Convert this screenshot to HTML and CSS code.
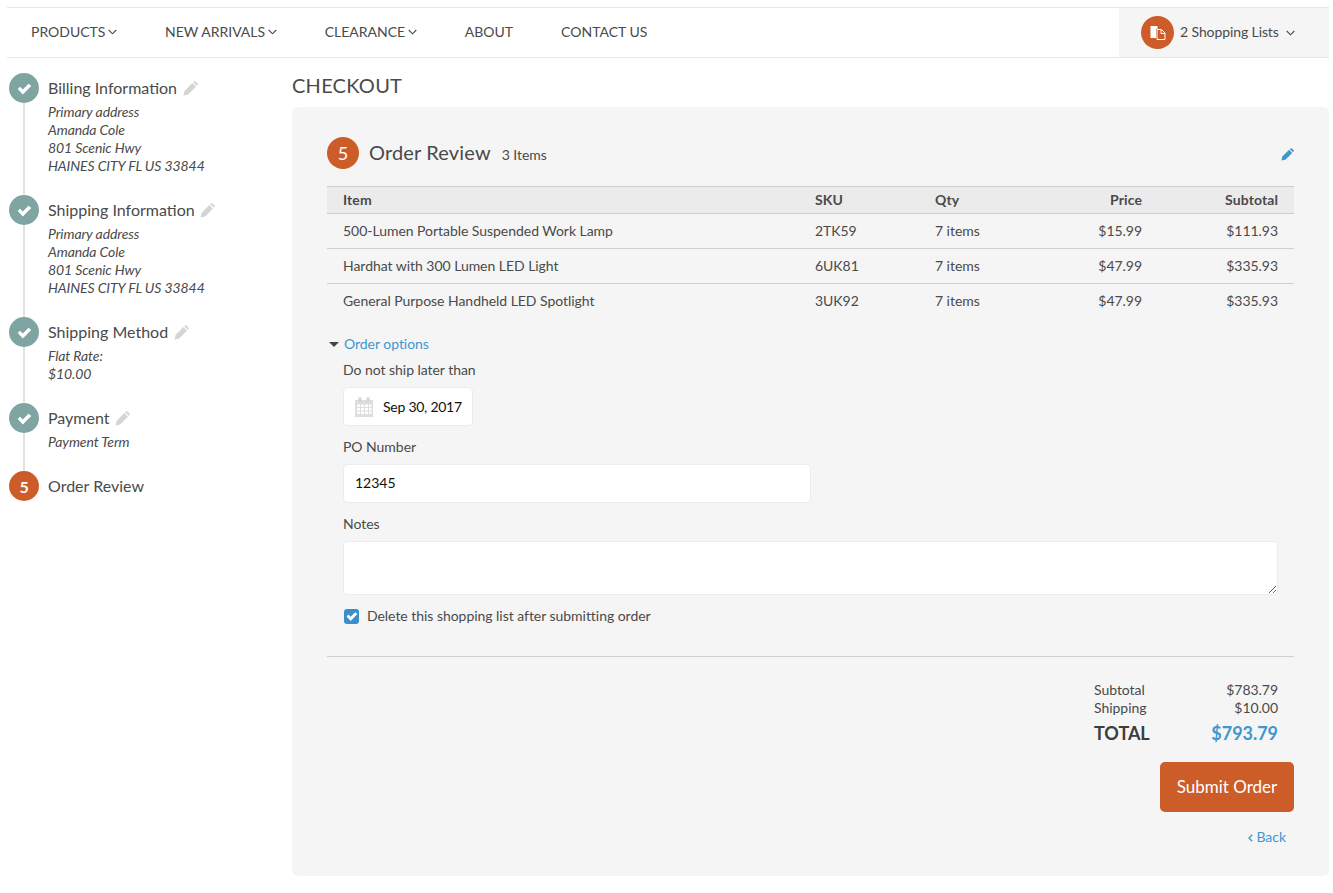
FILE: index.html
```html
<!DOCTYPE html>
<html lang="en">
<head>
    <meta charset="UTF-8">
    <meta name="viewport" content="width=device-width, initial-scale=1.0">
    <title>Checkout</title>
    <link rel="stylesheet" href="styles.css">
</head>
<body>

    <svg class="icon-defs" aria-hidden="true">
        <symbol id="i-pencil" viewBox="0 0 16 16">
            <path d="M.6 15.400l1-4.800 8.400-8.400 3.800 3.800-8.400 8.400z"/>
            <path d="M10.900 1.300l.7-.7a1.300 1.300 0 0 1 1.800 0l2 2a1.300 1.300 0 0 1 0 1.800l-.7.7z"/>
        </symbol>
        <symbol id="i-check" viewBox="0 0 16 16">
            <path d="M.8 8.500l2.400-2.400 3 3 6.100-6.200 2.900 2.400-9 9.200z"/>
        </symbol>
        <symbol id="i-chevron" viewBox="0 0 9 6">
            <path d="M.7 1l3.800 3.800L8.300 1" fill="none" stroke="currentColor" stroke-width="1.100"/>
        </symbol>
    </svg>

    <!-- Top navigation -->
    <nav class="topnav">
        <ul class="nav-links">
            <li>PRODUCTS <svg class="chevron"><use href="#i-chevron"/></svg></li>
            <li>NEW ARRIVALS <svg class="chevron"><use href="#i-chevron"/></svg></li>
            <li>CLEARANCE <svg class="chevron"><use href="#i-chevron"/></svg></li>
            <li>ABOUT</li>
            <li>CONTACT US</li>
        </ul>
        <div class="lists-menu">
            <span class="lists-badge">
                <svg width="16" height="16" viewBox="0 0 16 16">
                    <path d="M.5 1h7v3H6v9H.5z" fill="#fff"/>
                    <path d="M7 4.500h4.500l3.500 3.500v6.500H7z" fill="none" stroke="#fff"/>
                    <path d="M11 4.500V8.500h4" fill="none" stroke="#fff"/>
                </svg>
            </span>
            <span class="lists-label">2 Shopping Lists</span>
            <svg class="chevron chevron-lists"><use href="#i-chevron"/></svg>
        </div>
    </nav>

    <div class="layout">

        <!-- Checkout steps -->
        <aside class="steps">
            <div class="step step-address">
                <div class="rail">
                    <span class="dot done"><svg class="dot-check"><use href="#i-check"/></svg></span>
                    <span class="rail-line"></span>
                </div>
                <div class="step-body">
                    <h3>Billing Information <svg class="edit"><use href="#i-pencil"/></svg></h3>
                    <p>Primary address<br>Amanda Cole<br>801 Scenic Hwy<br>HAINES CITY FL US 33844</p>
                </div>
            </div>
            <div class="step step-address">
                <div class="rail">
                    <span class="dot done"><svg class="dot-check"><use href="#i-check"/></svg></span>
                    <span class="rail-line"></span>
                </div>
                <div class="step-body">
                    <h3>Shipping Information <svg class="edit"><use href="#i-pencil"/></svg></h3>
                    <p>Primary address<br>Amanda Cole<br>801 Scenic Hwy<br>HAINES CITY FL US 33844</p>
                </div>
            </div>
            <div class="step step-method">
                <div class="rail">
                    <span class="dot done"><svg class="dot-check"><use href="#i-check"/></svg></span>
                    <span class="rail-line"></span>
                </div>
                <div class="step-body">
                    <h3>Shipping Method <svg class="edit"><use href="#i-pencil"/></svg></h3>
                    <p>Flat Rate:<br>$10.00</p>
                </div>
            </div>
            <div class="step step-payment">
                <div class="rail">
                    <span class="dot done"><svg class="dot-check"><use href="#i-check"/></svg></span>
                    <span class="rail-line"></span>
                </div>
                <div class="step-body">
                    <h3>Payment <svg class="edit"><use href="#i-pencil"/></svg></h3>
                    <p>Payment Term</p>
                </div>
            </div>
            <div class="step">
                <div class="rail">
                    <span class="dot current">5</span>
                </div>
                <div class="step-body">
                    <h3>Order Review</h3>
                </div>
            </div>
        </aside>

        <main class="content">
            <h1>CHECKOUT</h1>

            <section class="panel">
                <header class="panel-head">
                    <span class="panel-num">5</span>
                    <h2>Order Review</h2>
                    <span class="item-count">3 Items</span>
                    <svg class="edit-blue"><use href="#i-pencil"/></svg>
                </header>

                <table class="items">
                    <thead>
                        <tr>
                            <th class="col-item">Item</th>
                            <th class="col-sku">SKU</th>
                            <th class="col-qty">Qty</th>
                            <th class="col-price">Price</th>
                            <th class="col-sub">Subtotal</th>
                        </tr>
                    </thead>
                    <tbody>
                        <tr>
                            <td>500-Lumen Portable Suspended Work Lamp</td>
                            <td>2TK59</td>
                            <td>7 items</td>
                            <td class="num">$15.99</td>
                            <td class="num">$111.93</td>
                        </tr>
                        <tr>
                            <td>Hardhat with 300 Lumen LED Light</td>
                            <td>6UK81</td>
                            <td>7 items</td>
                            <td class="num">$47.99</td>
                            <td class="num">$335.93</td>
                        </tr>
                        <tr>
                            <td>General Purpose Handheld LED Spotlight</td>
                            <td>3UK92</td>
                            <td>7 items</td>
                            <td class="num">$47.99</td>
                            <td class="num">$335.93</td>
                        </tr>
                    </tbody>
                </table>

                <div class="options-toggle"><span class="caret"></span><a href="#">Order options</a></div>

                <form class="options">
                    <label class="field-label">Do not ship later than</label>
                    <div class="date-input">
                        <svg width="20" height="20" viewBox="0 0 20 20">
                            <path d="M1 3h18v17H1z" fill="#dedede"/>
                            <path d="M4.500.500h3V5h-3zM12.500.500h3V5h-3z" fill="#d4d4d4"/>
                            <path d="M3 7.500h3v2.500H3zM7 7.500h3v2.500H7zM11 7.500h3v2.500h-3zM15 7.500h2.500v2.500H15zM3 11h3v2.500H3zM7 11h3v2.500H7zM11 11h3v2.500h-3zM15 11h2.500v2.500H15zM3 14.500h3V17H3zM7 14.500h3V17H7zM11 14.500h3V17h-3zM15 14.500h2.500V17H15z" fill="#fff"/>
                        </svg>
                        <span class="date-value">Sep 30, 2017</span>
                    </div>

                    <label class="field-label">PO Number</label>
                    <input class="text-input" type="text" value="12345">

                    <label class="field-label">Notes</label>
                    <textarea class="notes"></textarea>

                    <label class="check-row">
                        <span class="checkbox"><svg width="12" height="12"><use href="#i-check"/></svg></span>
                        Delete this shopping list after submitting order
                    </label>
                </form>

                <hr class="divider">

                <div class="summary">
                    <div class="totals">
                        <div class="total-row"><span>Subtotal</span><span>$783.79</span></div>
                        <div class="total-row"><span>Shipping</span><span>$10.00</span></div>
                        <div class="total-row grand"><span>TOTAL</span><span class="grand-value">$793.79</span></div>
                    </div>
                    <button class="submit" type="button">Submit Order</button>
                    <a class="back" href="#"><svg width="5" height="8" viewBox="0 0 5 8"><path d="M4.200.800L1 4l3.200 3.200" fill="none" stroke="currentColor" stroke-width="1.300"/></svg> Back</a>
                </div>
            </section>
        </main>
    </div>

</body>
</html>
```

FILE: styles.css
```css
body {
    font-family: Lato, "Open Sans", sans-serif;
    font-size: 14px;
    letter-spacing: -0.04px;
    color: #4a4a4a;
    background-color: #fff;
    margin: 0;
    padding: 7px 4px 0 7px;
}

.icon-defs {
    display: none;
}

/* top nav */
.topnav {
    display: flex;
    justify-content: space-between;
    height: 49px;
    border-top: 1px solid #e8e8e8;
    border-bottom: 1px solid #e8e8e8;
}

.nav-links {
    display: flex;
    align-items: center;
    gap: 48px;
    list-style: none;
    margin: 0;
    padding: 0 0 2px 24px;
    letter-spacing: 0;
}

.chevron {
    width: 9px;
    height: 6px;
    vertical-align: 2px;
    margin-left: -1px;
}

.lists-menu {
    display: flex;
    align-items: center;
    width: 210px;
    padding-left: 22px;
    box-sizing: border-box;
    background-color: #f5f5f5;
}

.lists-badge {
    display: flex;
    align-items: center;
    justify-content: center;
    width: 33px;
    height: 33px;
    margin-right: 6px;
    border-radius: 50%;
    background-color: #cc5c28;
}

.lists-label {
    padding-bottom: 2px;
    letter-spacing: -0.1px;
}

.chevron-lists {
    margin-left: 7px;
}

.layout {
    display: flex;
}

/* step list */
.steps {
    width: 285px;
    flex-shrink: 0;
    padding: 15px 0 0 2px;
    box-sizing: border-box;
}

.step {
    display: flex;
    gap: 9px;
}

.step-address {
    height: 122px;
}

.step-method {
    height: 86px;
}

.step-payment {
    height: 68px;
}

.rail {
    display: flex;
    flex-direction: column;
    align-items: center;
    width: 30px;
}

.rail-line {
    flex: 1;
    width: 2px;
    background-color: #e2e2e2;
}

.dot {
    display: flex;
    align-items: center;
    justify-content: center;
    flex-shrink: 0;
    width: 30px;
    height: 30px;
    border-radius: 50%;
    color: #fff;
    font-size: 16px;
    font-weight: bold;
}

.dot.done {
    background-color: #7fa5a3;
}

.dot.current {
    background-color: #cc5c28;
}

.dot-check {
    width: 15px;
    height: 15px;
    fill: #fff;
}

.step-body h3 {
    margin: 0;
    font-size: 16px;
    font-weight: normal;
    line-height: 30px;
    letter-spacing: 0;
}

.step-body p {
    margin: 0;
    font-size: 14px;
    font-style: italic;
    line-height: 18px;
    letter-spacing: -0.1px;
}

.edit {
    width: 15px;
    height: 15px;
    margin-left: 1.5px;
    vertical-align: -2px;
    fill: #d4d4d4;
}

/* main area */
.content {
    flex: 1;
}

.content h1 {
    margin: 0;
    padding-top: 15px;
    font-size: 20px;
    font-weight: normal;
    line-height: 24px;
    height: 34px;
    letter-spacing: 0.25px;
}

.panel {
    height: 769px;
    padding: 30px 35px 0;
    box-sizing: border-box;
    background-color: #f5f5f5;
    border-radius: 6px;
}

.panel-head {
    display: flex;
    align-items: center;
    height: 32px;
}

.panel-num {
    display: flex;
    align-items: center;
    justify-content: center;
    width: 32px;
    height: 32px;
    margin-right: 10px;
    border-radius: 50%;
    background-color: #cc5c28;
    color: #fff;
    font-size: 18px;
}

.panel-head h2 {
    margin: 0 11px 0 0;
    padding-bottom: 2px;
    font-size: 20px;
    font-weight: normal;
    letter-spacing: 0.15px;
}

.item-count {
    padding-top: 2px;
}

.edit-blue {
    width: 13px;
    height: 13px;
    margin: 2px 0 0 auto;
    fill: #3f97d0;
}

/* items table */
.items {
    width: 100%;
    margin-top: 17px;
    border-collapse: collapse;
    table-layout: fixed;
}

.items th,
.items td {
    padding: 0 16px 2px;
    text-align: left;
}

.items th {
    height: 24px;
    background-color: #ebebeb;
    border-top: 1px solid #cfcfcf;
    border-bottom: 1px solid #cfcfcf;
    font-weight: bold;
    letter-spacing: 0.1px;
}

.items td {
    height: 32px;
    border-bottom: 1px solid #cfcfcf;
}

.items tbody tr:last-child td {
    border-bottom: none;
}

.col-item {
    width: 440px;
}

.col-sku,
.col-qty {
    width: 88px;
}

.col-price {
    width: 87px;
}

.col-sub {
    width: 104px;
}

.items .col-price,
.items .col-sub,
.items .num {
    text-align: right;
}

/* order options */
.options-toggle {
    display: flex;
    align-items: center;
    margin-top: 17px;
    line-height: 18px;
    padding-left: 2px;
}

.caret {
    width: 0;
    height: 0;
    margin-right: 5px;
    border-left: 5px solid transparent;
    border-right: 5px solid transparent;
    border-top: 5px solid #444;
}

a {
    color: #3f97d0;
    text-decoration: none;
}

.options {
    padding-left: 16px;
}

.field-label {
    display: block;
    margin-top: 8px;
    line-height: 18px;
}

.date-input,
.text-input,
.notes {
    display: block;
    box-sizing: border-box;
    margin-top: 8px;
    background-color: #fff;
    border: 1px solid #ececec;
    border-radius: 4px;
    font-family: inherit;
    font-size: 14px;
    color: #111;
}

.date-input {
    display: flex;
    align-items: center;
    gap: 9px;
    width: 130px;
    height: 39px;
    padding-left: 10px;
    margin-bottom: 12px;
}

.date-value {
    letter-spacing: -0.25px;
}

.text-input {
    width: 468px;
    height: 39px;
    padding: 0 11px 2px;
    margin-bottom: 12px;
}

.notes {
    width: 935px;
    height: 54px;
}

.check-row {
    display: flex;
    align-items: center;
    gap: 8px;
    margin-top: 12px;
    line-height: 18px;
}

.checkbox {
    display: flex;
    align-items: center;
    justify-content: center;
    width: 15px;
    height: 15px;
    margin-left: 1px;
    border-radius: 3px;
    background-color: #3a8fcb;
    fill: #fff;
}

.divider {
    margin: 31px 0 0;
    border: none;
    border-top: 1px solid #cfcfcf;
}

/* totals */
.summary {
    display: flex;
    flex-direction: column;
    align-items: flex-end;
}

.totals {
    width: 184px;
    margin: 24px 16px 0 0;
}

.total-row {
    display: flex;
    justify-content: space-between;
    line-height: 18px;
}

.grand {
    align-items: center;
    margin-top: 3px;
    line-height: 26px;
    font-size: 18px;
    font-weight: bold;
    color: #3d3d3d;
}

.grand-value {
    color: #3f97d0;
}

.submit {
    width: 134px;
    height: 50px;
    margin-top: 16px;
    padding-bottom: 2px;
    border: none;
    border-radius: 5px;
    background-color: #cc5c28;
    color: #fff;
    font-family: inherit;
    font-size: 17px;
}

.back {
    margin: 16px 8px 0 0;
    line-height: 18px;
}
```
